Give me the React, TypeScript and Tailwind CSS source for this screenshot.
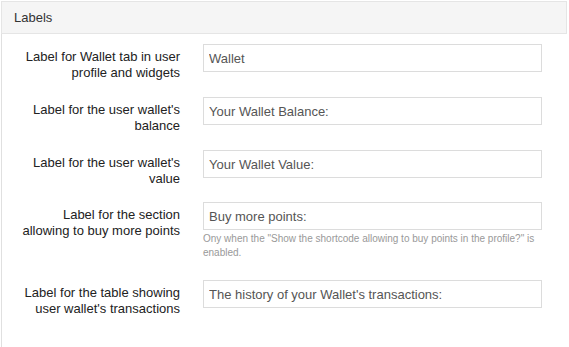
const rows = [
    { label: ['Label for Wallet tab in user', 'profile and widgets'], value: 'Wallet', mb: 'mb-[16px]' },
    { label: ["Label for the user wallet's", 'balance'], value: 'Your Wallet Balance:', mb: 'mb-[16px]' },
    { label: ["Label for the user wallet's", 'value'], value: 'Your Wallet Value:', mb: 'mb-[15px]' },
    {
        label: ['Label for the section', 'allowing to buy more points'],
        value: 'Buy more points:',
        help: ['Ony when the "Show the shortcode allowing to buy points in the profile?" is', 'enabled.'],
        mb: 'mb-[20px]',
    },
    { label: ['Label for the table showing', "user wallet's transactions"], value: "The history of your Wallet's transactions:", mb: 'mb-0' },
];

function Row({ row }: { row: (typeof rows)[number] }) {
    return (
        <div className={`flex items-start ${row.mb}`}>
            <div className="w-[178px] shrink-0 pt-[5px] text-right text-[13px] leading-[16px] text-[#222]">
                {row.label[0]}
                <br />
                {row.label[1]}
            </div>
            <div className="ml-[23px] w-[339px]">
                <input
                    readOnly
                    value={row.value}
                    className="block h-[28px] w-full border border-[#dcdcdc] bg-white px-[5px] text-[13px] text-[#555] outline-none"
                />
                {row.help && (
                    <p className="mt-[2px] text-[10px] leading-[14px] text-[#999]">
                        {row.help[0]}
                        <br />
                        {row.help[1]}
                    </p>
                )}
            </div>
        </div>
    );
}

export default function App() {
    return (
        <div className="h-[347px] w-[569px] bg-white pl-px pt-px" style={{ fontFamily: '"Liberation Sans", Arial, sans-serif' }}>
            <div className="w-[566px]">
                <div className="flex h-[33px] items-center border border-[#e5e5e5] bg-[#f5f5f5] pl-[12px] text-[13px] text-[#333]">
                    Labels
                </div>
                <div className="h-[313px] border-l border-[#e0e0e0] pt-[10px]">
                    {rows.map((row) => (
                        <Row key={row.value} row={row} />
                    ))}
                </div>
            </div>
        </div>
    );
}
